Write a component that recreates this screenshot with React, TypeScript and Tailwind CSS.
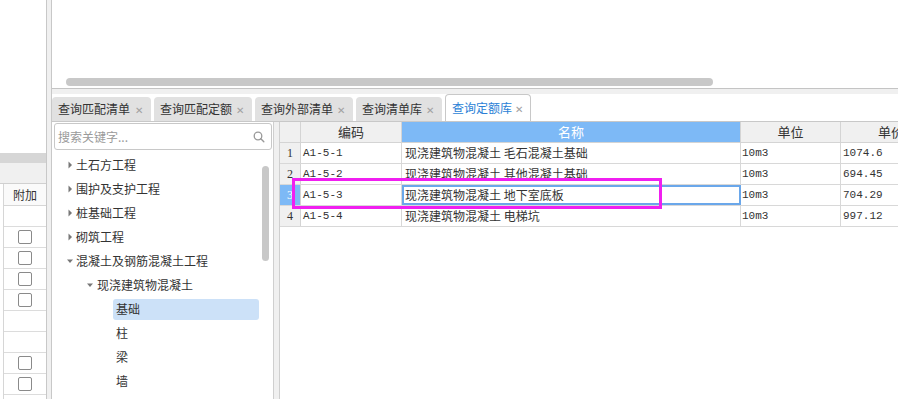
import React from "react";

const FONT = { fontFamily: '"Noto Sans CJK SC", "Noto Sans", sans-serif' };
const MONO = { fontFamily: '"Liberation Mono", monospace' };

function Tri({ open }: { open?: boolean }) {
  return open ? (
    <svg width="8" height="8" viewBox="0 0 8 8" className="shrink-0">
      <path d="M1 2.5 L7 2.5 L4 6 Z" fill="#777" />
    </svg>
  ) : (
    <svg width="8" height="8" viewBox="0 0 8 8" className="shrink-0">
      <path d="M2.5 0.5 L6 4 L2.5 7.5 Z" fill="#777" />
    </svg>
  );
}

const tabs = [
  { t: "查询匹配清单", w: "w-[99px]" },
  { t: "查询匹配定额", w: "w-[98px]" },
  { t: "查询外部清单", w: "w-[98px]" },
  { t: "查询清单库", w: "w-[86px]" },
];

const rows = [
  { n: "1", code: "A1-5-1", name: "现浇建筑物混凝土 毛石混凝土基础", unit: "10m3", price: "1074.6" },
  { n: "2", code: "A1-5-2", name: "现浇建筑物混凝土 其他混凝土基础", unit: "10m3", price: "694.45" },
  { n: "3", code: "A1-5-3", name: "现浇建筑物混凝土 地下室底板", unit: "10m3", price: "704.29" },
  { n: "4", code: "A1-5-4", name: "现浇建筑物混凝土 电梯坑", unit: "10m3", price: "997.12" },
];

const leftRows = [false, true, true, true, true, false, false, true, true];

export default function App() {
  return (
    <div className="w-[898px] h-[399px] overflow-hidden flex bg-white text-[12px] text-[#333]" style={FONT}>
      {/* left panel */}
      <div className="w-[46px] shrink-0 flex flex-col">
        <div className="h-[153px] bg-white" />
        <div className="h-[10px] bg-[#d6d6d6]" />
        <div className="h-[21px] bg-[#f0f0f0] border-b border-[#d0d0d0]" />
        <div className="flex-1 pl-[3px]">
          <div className="border-l border-[#d6d6d6] h-full">
            <div className="h-[22px] border-b border-[#d6d6d6] bg-[#fafafa] flex items-center justify-center text-[12px] text-[#333]">
              附加
            </div>
            {leftRows.map((cb, i) => (
              <div key={i} className="h-[21px] border-b border-[#dcdcdc] flex items-center justify-center">
                {cb && <div className="w-[14px] h-[14px] rounded-[2px] border border-[#8a8a8a] bg-white" />}
              </div>
            ))}
          </div>
        </div>
      </div>

      {/* separator */}
      <div className="w-[6px] shrink-0 bg-[#f0f0f0] border-l border-r border-[#c8c8c8]" />

      {/* main */}
      <div className="flex-1 flex flex-col min-w-0">
        <div className="h-[89px] shrink-0 border-b border-[#c4c4c4] flex flex-col justify-end pb-[2px]">
          <div className="ml-[14px] w-[647px] h-[8px] rounded-full bg-[#c8c8c8]" />
        </div>
        <div className="h-[5px] shrink-0 bg-[#f0f0f0]" />
        <div className="h-[27px] shrink-0 flex items-end gap-[3px] bg-white whitespace-nowrap">
          {tabs.map((tb, i) => (
            <div
              key={i}
              className={`${tb.w} h-[24px] rounded-t-[4px] bg-[#e1e1e1] flex items-center justify-between pl-[6px] pr-[8px] text-[#333]`}
            >
              <span>{tb.t}</span>
              <span className="text-[10px] text-[#a0a0a0]">✕</span>
            </div>
          ))}
          <div className="w-[86px] h-[27px] rounded-t-[4px] bg-white border border-b-0 border-[#c8c8c8] flex items-center justify-between pl-[6px] pr-[7px]">
            <span className="text-[#2b7fd6]">查询定额库</span>
            <span className="text-[10px] text-[#a0a0a0]">✕</span>
          </div>
        </div>

        <div className="flex-1 flex border-t border-[#c8c8c8] min-h-0">
          {/* tree */}
          <div className="w-[221px] shrink-0 flex flex-col">
            <div className="mt-[1px] ml-[2px] mr-[1px] h-[27px] rounded-[3px] border border-[#c8c8c8] flex items-center justify-between pl-[3px] pr-[6px]">
              <span className="text-[#9a9a9a] text-[12px]">搜索关键字...</span>
              <svg width="12" height="12" viewBox="0 0 12 12">
                <circle cx="5" cy="5" r="3.8" fill="none" stroke="#999" strokeWidth="1.3" />
                <path d="M7.8 7.8 L10.8 10.8" stroke="#999" strokeWidth="1.4" strokeLinecap="round" />
              </svg>
            </div>
            <div className="relative flex-1 pt-[3px]">
              {["土石方工程", "围护及支护工程", "桩基础工程", "砌筑工程"].map((t) => (
                <div key={t} className="h-[24px] flex items-center pl-[14px]">
                  <Tri />
                  <span className="ml-[2px]">{t}</span>
                </div>
              ))}
              <div className="h-[24px] flex items-center pl-[14px] gap-[2px]">
                <Tri open />
                <span>混凝土及钢筋混凝土工程</span>
              </div>
              <div className="h-[24px] flex items-center pl-[34px] gap-[3px]">
                <Tri open />
                <span>现浇建筑物混凝土</span>
              </div>
              <div className="h-[24px] flex items-center pl-[61px] pr-[14px]">
                <div className="flex-1 h-[21px] rounded-[3px] bg-[#cce1f8] flex items-center pl-[3px]">基础</div>
              </div>
              {["柱", "梁", "墙"].map((t) => (
                <div key={t} className="h-[24px] flex items-center pl-[64px]">
                  {t}
                </div>
              ))}
              <div className="absolute left-[210px] top-[16px] w-[7px] h-[95px] rounded-full bg-[#c8c8c8]" />
            </div>
          </div>

          {/* splitter */}
          <div className="w-[7px] shrink-0 bg-[#f0f0f0] border-l border-r border-[#cfcfcf]" />

          {/* grid */}
          <div className="relative flex-1 min-w-0 overflow-hidden">
            <div className="flex h-[21px] border-b border-[#d4d4d4] whitespace-nowrap">
              <div className="w-[21px] shrink-0 bg-[#f0f0f0] border-r border-[#d4d4d4]" />
              <div className="w-[101px] shrink-0 bg-[#f0f0f0] border-r border-[#d4d4d4] flex items-center justify-center text-[13px]">编码</div>
              <div className="w-[339px] shrink-0 bg-[#7db9f6] border-r border-[#d4d4d4] flex items-center justify-center text-white text-[13px]">名称</div>
              <div className="w-[100px] shrink-0 bg-[#f0f0f0] border-r border-[#d4d4d4] flex items-center justify-center text-[13px]">单位</div>
              <div className="w-[100px] shrink-0 bg-[#f0f0f0] flex items-center justify-center text-[13px]">单价</div>
            </div>
            {rows.map((r) => {
              const sel = r.n === "3";
              return (
                <div key={r.n} className="flex h-[21px] border-b border-[#d8d8d8] whitespace-pre">
                  <div
                    className={
                      sel
                        ? "w-[21px] shrink-0 border-r border-[#d4d4d4] flex items-center justify-center text-[12px] bg-[#7db9f6] text-white"
                        : "w-[21px] shrink-0 border-r border-[#d4d4d4] flex items-center justify-center text-[12px] bg-[#f0f0f0] text-[#333]"
                    }
                    style={{ fontFamily: '"Liberation Serif", serif' }}
                  >
                    {r.n}
                  </div>
                  <div className="w-[101px] shrink-0 border-r border-[#d8d8d8] flex items-center pl-[2px] text-[11px]" style={MONO}>
                    {r.code}
                  </div>
                  {sel ? (
                    <div className="w-[339px] shrink-0 border-2 border-[#6aa7ea] flex items-center pl-[1px]">{r.name}</div>
                  ) : (
                    <div className="w-[339px] shrink-0 border-r border-[#d8d8d8] flex items-center pl-[3px]">{r.name}</div>
                  )}
                  <div className="w-[100px] shrink-0 border-r border-[#d8d8d8] flex items-center pl-[1px] text-[11px]" style={MONO}>
                    {r.unit}
                  </div>
                  <div className="w-[100px] shrink-0 flex items-center pl-[2px] text-[11px]" style={MONO}>
                    {r.price}
                  </div>
                </div>
              );
            })}
            <div className="absolute left-[12px] top-[56px] w-[370px] h-[31px] border-[3px] border-[#f01ff0]" />
          </div>
        </div>
      </div>
    </div>
  );
}
